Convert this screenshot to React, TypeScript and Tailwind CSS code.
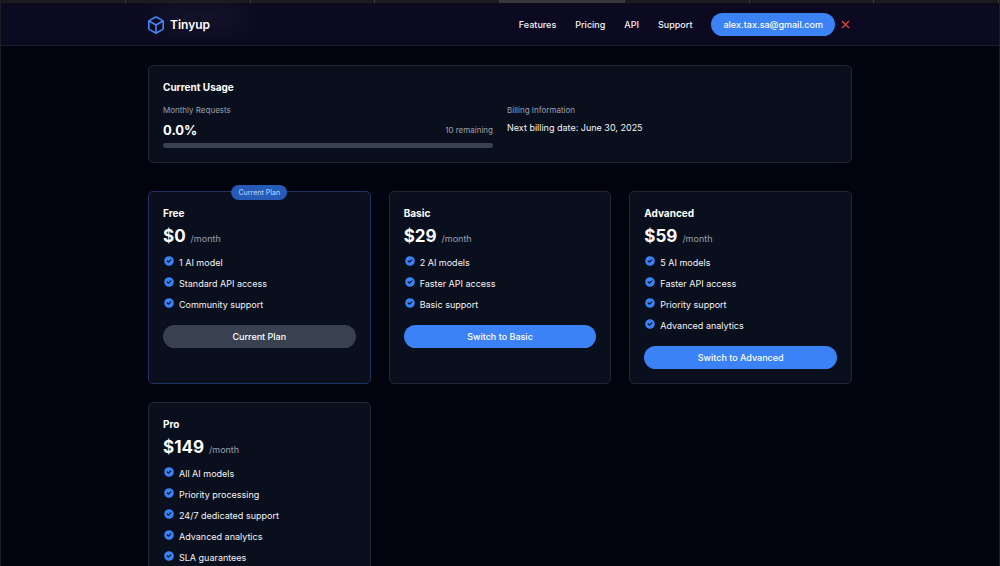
import { Box, X } from 'lucide-react';

const navLinks = ['Features', 'Pricing', 'API', 'Support'];

const plans = [
  {
    name: 'Free',
    price: '$0',
    features: ['1 AI model', 'Standard API access', 'Community support'],
    action: 'Current Plan',
    current: true,
  },
  {
    name: 'Basic',
    price: '$29',
    features: ['2 AI models', 'Faster API access', 'Basic support'],
    action: 'Switch to Basic',
  },
  {
    name: 'Advanced',
    price: '$59',
    features: ['5 AI models', 'Faster API access', 'Priority support', 'Advanced analytics'],
    action: 'Switch to Advanced',
  },
  {
    name: 'Pro',
    price: '$149',
    features: [
      'All AI models',
      'Priority processing',
      '24/7 dedicated support',
      'Advanced analytics',
      'SLA guarantees',
    ],
  },
];

type Plan = {
  name: string;
  price: string;
  features: string[];
  action?: string;
  current?: boolean;
};

function CheckIcon() {
  return (
    <svg viewBox="0 0 20 20" fill="currentColor" className="size-3 shrink-0 text-[#3b82f6]">
      <path
        fillRule="evenodd"
        clipRule="evenodd"
        d="M10 18a8 8 0 1 0 0-16 8 8 0 0 0 0 16zm3.707-9.293a1 1 0 0 0-1.414-1.414L9 10.586 7.707 9.293a1 1 0 0 0-1.414 1.414l2 2a1 1 0 0 0 1.414 0l4-4z"
      />
    </svg>
  );
}

function TabStrip() {
  return (
    <div className="grid h-1 grid-cols-8 border-b border-[#0d0d12] bg-[#1b1b1f]">
      {[0, 1, 2, 3, 4, 5, 6, 7].map((tab) => (
        <div
          key={tab}
          className={tab === 4 ? 'border-r border-[#3a3a3e] bg-[#37373b]' : 'border-r border-[#3a3a3e]'}
        />
      ))}
    </div>
  );
}

function Header() {
  return (
    <header className="relative border-b border-[#1c1e2f] bg-[#0b0a20]">
      <div className="absolute top-1 left-[150px] h-5 w-24 rounded-full bg-white/5 blur-md" />
      <div className="relative mx-auto flex h-[41px] max-w-[704px] items-center justify-between">
        <a href="#" className="flex items-center gap-[6px] text-[12px] font-semibold text-white">
          <Box viewBox="2 1 20 22" className="h-[18px] w-4 text-[#4a86f5]" />
          Tinyup
        </a>
        <nav className="flex items-center gap-[19px] text-[9px] font-medium text-gray-100">
          {navLinks.map((link) => (
            <a key={link} href="#">
              {link}
            </a>
          ))}
          <div className="flex items-center gap-1">
            <button className="h-[23px] rounded-full bg-[#3b82f6] px-3 text-white">alex.tax.sa@gmail.com</button>
            <button aria-label="Log out" className="text-[#ef4444]">
              <X className="size-[13px]" />
            </button>
          </div>
        </nav>
      </div>
    </header>
  );
}

function UsageCard() {
  return (
    <section className="rounded-[5px] border border-[#222733] bg-[#0a0f1d] p-[14px]">
      <h2 className="text-[10px] leading-[14px] font-bold text-white">Current Usage</h2>
      <div className="mt-[10px] grid grid-cols-2 gap-[14px]">
        <div>
          <p className="text-[8px] leading-3 text-gray-400">Monthly Requests</p>
          <div className="mt-[5px] flex items-center justify-between">
            <span className="text-[13px] leading-[18px] font-bold text-white">0.0%</span>
            <span className="text-[8px] leading-3 text-gray-400">10 remaining</span>
          </div>
          <div className="mt-1 h-[5px] rounded-full bg-[#394150]" />
        </div>
        <div>
          <p className="text-[8px] leading-3 text-gray-400">Billing Information</p>
          <p className="mt-[5px] text-[9px] leading-[14px] text-gray-100">Next billing date: June 30, 2025</p>
        </div>
      </div>
    </section>
  );
}

function PlanCard({ plan }: { plan: Plan }) {
  return (
    <section
      className={`relative rounded-[5px] border bg-[#0a0f1d] p-[14px] ${
        plan.current ? 'border-[#20315f]' : 'border-[#222733]'
      }`}
    >
      {plan.current && (
        <span className="absolute -top-[7px] left-1/2 h-[15px] -translate-x-1/2 rounded-full bg-[#265bb8] px-[7px] text-[7px] leading-[15px] font-medium whitespace-nowrap text-[#a9c8fb]">
          Current Plan
        </span>
      )}
      <h3 className="text-[10px] leading-[14px] font-bold text-white">{plan.name}</h3>
      <p className="mt-1 flex h-6 items-baseline gap-[5px]">
        <span className="text-[17px] leading-6 font-bold text-white">{plan.price}</span>
        <span className="text-[9px] leading-[14px] text-gray-400">/month</span>
      </p>
      <ul className="mt-[7px] space-y-[6px]">
        {plan.features.map((feature) => (
          <li key={feature} className="flex items-start gap-1 text-[9px] leading-[15px] text-gray-100">
            <CheckIcon />
            {feature}
          </li>
        ))}
      </ul>
      {plan.action && (
        <button
          disabled={plan.current}
          className={`mt-[13px] h-[23px] w-full rounded-full text-[9px] font-medium text-white ${
            plan.current ? 'bg-[#394150]' : 'bg-[#3b82f6]'
          }`}
        >
          {plan.action}
        </button>
      )}
    </section>
  );
}

export default function App() {
  return (
    <div className="h-screen overflow-hidden border-x border-[#1b1d24] bg-[#01040f] font-['Inter',sans-serif]">
      <TabStrip />
      <Header />
      <main className="mx-auto mt-[19px] max-w-[704px]">
        <UsageCard />
        <div className="mt-7 grid grid-cols-3 gap-[18px]">
          {plans.map((plan) => (
            <PlanCard key={plan.name} plan={plan} />
          ))}
        </div>
      </main>
    </div>
  );
}
